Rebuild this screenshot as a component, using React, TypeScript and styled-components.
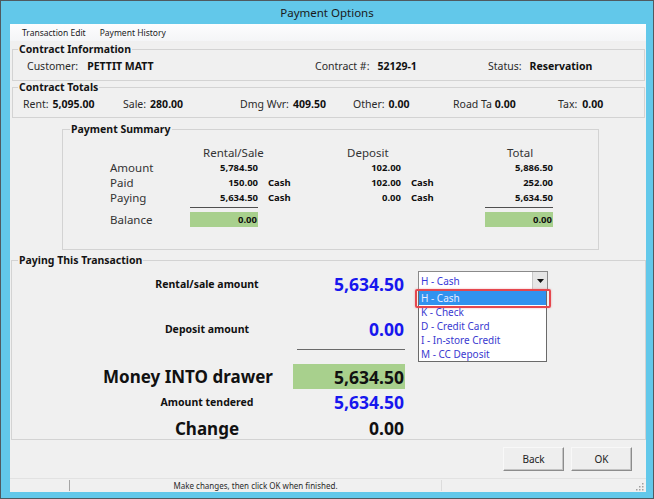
import styled, { createGlobalStyle } from 'styled-components';

const GlobalStyle = createGlobalStyle`
  html, body {
    margin: 0;
    padding: 0;
    background: #ffffff;
  }
  body {
    font-family: "Segoe UI", "Noto Sans", sans-serif;
  }
  * {
    box-sizing: border-box;
  }
`;

const Window = styled.div`
  width: 654px;
  height: 499px;
  background: #62c8ea;
  border: 1px solid #4f5a60;
  display: flex;
  flex-direction: column;
  color: #1b1b1b;
`;

const TitleBar = styled.div`
  height: 23px;
  display: flex;
  align-items: center;
  justify-content: center;
  font-size: 11.5px;
  color: #1a1a1a;
`;

const Client = styled.div`
  flex: 1;
  margin: 0 7px 6px 9px;
  background: #f0f0f0;
  display: flex;
  flex-direction: column;
`;

const MenuBar = styled.div`
  height: 17px;
  display: flex;
  align-items: center;
  gap: 14px;
  padding-left: 12px;
  font-size: 8.5px;
  background: linear-gradient(#fdfdfe, #f4f5f7);
`;

const GroupBox = styled.div<{ $mt: number; $ml: number; $mr: number; $pb: number }>`
  border: 1px solid #d3d3d3;
  margin: ${(p) => p.$mt}px ${(p) => p.$mr}px 0 ${(p) => p.$ml}px;
  padding-bottom: ${(p) => p.$pb}px;
`;

const Legend = styled.div<{ $ml: number }>`
  display: table;
  margin: -7px 0 0 ${(p) => p.$ml}px;
  padding: 0 1px;
  background: #f0f0f0;
  font-size: 10.5px;
  font-weight: 700;
  line-height: 13px;
  color: #141414;
`;

const InfoRow = styled.div<{ $mt: number; $pl: number }>`
  display: flex;
  height: 14px;
  align-items: center;
  margin-top: ${(p) => p.$mt}px;
  padding-left: ${(p) => p.$pl}px;
  font-size: 10.5px;
`;

const Field = styled.div<{ $w?: number; $gap: number }>`
  display: flex;
  align-items: center;
  gap: ${(p) => p.$gap}px;
  width: ${(p) => (p.$w ? `${p.$w}px` : 'auto')};
  white-space: nowrap;
`;

const FieldLabel = styled.span`
  color: #2a2a2a;
`;

const FieldValue = styled.span`
  font-weight: 700;
  color: #111;
`;

const SummaryGrid = styled.div`
  display: grid;
  grid-template-columns: 80px 68px 42px 101px 84px 68px;
  margin: 9px 0 0 47px;
`;

const Head = styled.div<{ $span: number; $pl: number }>`
  grid-column: span ${(p) => p.$span};
  padding-left: ${(p) => p.$pl}px;
  font-size: 11.5px;
  line-height: 15px;
  height: 15px;
  color: #333;
`;

const RowLabel = styled.div`
  font-size: 11.5px;
  line-height: 15px;
  height: 15px;
  color: #333;
`;

const Amount = styled.div`
  font-size: 9.5px;
  font-weight: 700;
  line-height: 15px;
  height: 15px;
  text-align: right;
  color: #111;
`;

const Method = styled.div`
  font-size: 9.5px;
  font-weight: 700;
  line-height: 15px;
  height: 15px;
  padding-left: 10px;
  color: #111;
`;

const Empty = styled.div``;

const Rule = styled.div`
  height: 5px;
  margin-top: 2px;
  border-top: 1px solid #505050;
`;

const BalanceBox = styled.div`
  height: 15px;
  background: #a8d08d;
  font-size: 9.5px;
  font-weight: 700;
  line-height: 15px;
  text-align: right;
  padding-right: 1px;
  color: #111;
`;

const PayRow = styled.div<{ $h: number; $mt: number }>`
  display: grid;
  grid-template-columns: 172px 112px 143px;
  align-items: center;
  height: ${(p) => p.$h}px;
  margin-top: ${(p) => p.$mt}px;
  padding-left: 109px;
`;

const PayLabel = styled.div<{ $big?: boolean; $shift?: number }>`
  text-align: center;
  white-space: nowrap;
  margin-left: ${(p) => -(p.$shift || 0)}px;
  margin-right: ${(p) => p.$shift || 0}px;
  font-size: ${(p) => (p.$big ? '17px' : '10.5px')};
  font-weight: 700;
  color: #111;
`;

const PayValue = styled.div<{ $blue?: boolean; $green?: boolean }>`
  height: 100%;
  display: flex;
  align-items: center;
  justify-content: flex-end;
  padding-right: 1px;
  font-size: 17.5px;
  font-weight: 700;
  color: ${(p) => (p.$blue ? '#1717ee' : '#111')};
  background: ${(p) => (p.$green ? '#a8d08d' : 'transparent')};
`;

const ValueRule = styled.div`
  grid-column: 2;
  margin-left: 4px;
  border-top: 1px solid #6a6a6a;
`;

const ComboWrap = styled.div`
  position: relative;
  align-self: start;
  margin: -1px 0 0 13px;
`;

const Combo = styled.div`
  height: 20px;
  width: 130px;
  background: #fff;
  border: 1px solid #8a8a8a;
  display: flex;
  align-items: center;
  font-size: 10px;
  color: #3737d8;
`;

const ComboText = styled.div`
  flex: 1;
  padding-left: 2px;
`;

const ComboButton = styled.div`
  width: 15px;
  height: 100%;
  background: #e6e6e6;
  border-left: 1px solid #c8c8c8;
  display: flex;
  align-items: center;
  justify-content: center;
`;

const DropList = styled.div`
  position: absolute;
  top: 19px;
  left: 0;
  width: 129px;
  background: #fff;
  border: 1px solid #6a6a6a;
  z-index: 2;
`;

const DropItem = styled.div<{ $selected?: boolean }>`
  position: relative;
  height: 14px;
  line-height: 14px;
  padding-left: 2px;
  font-size: 10px;
  color: ${(p) => (p.$selected ? '#e8ecff' : '#3a3ad0')};
  background: ${(p) => (p.$selected ? '#3192ef' : 'transparent')};
`;

const Highlight = styled.div`
  position: absolute;
  top: -2px;
  left: -4px;
  right: -5px;
  bottom: -3px;
  border: 2px solid #e5474e;
  border-radius: 2px;
  box-shadow: 0 0 2px rgba(229, 71, 78, 0.5);
`;

const ButtonBar = styled.div`
  flex: 1;
  display: flex;
  justify-content: flex-end;
  align-items: flex-start;
  gap: 7px;
  padding: 7px 14px 0 0;
`;

const DialogButton = styled.button`
  width: 61px;
  height: 24px;
  font-family: inherit;
  font-size: 10px;
  color: #222;
  background: #eeeeee;
  border: 1px solid;
  border-color: #f8f8f8 #8c8c8c #8c8c8c #f8f8f8;
  box-shadow: inset -1px -1px 0 #c4c4c4;
  padding: 0;
`;

const StatusBar = styled.div`
  height: 14px;
  display: flex;
  align-items: stretch;
  border-top: 1px solid #e2e2e2;
  font-size: 8px;
  color: #2a2a2a;
`;

const StatusPanel = styled.div<{ $w: number; $line: string }>`
  width: ${(p) => p.$w}px;
  border-right: 1px solid ${(p) => p.$line};
  display: flex;
  align-items: center;
  justify-content: center;
  margin: 1px 0;
`;

const Grip = styled.div`
  flex: 1;
  display: flex;
  justify-content: flex-end;
  align-items: flex-end;
  padding: 0 2px 1px 0;
`;

const summaryRows = [
  { label: 'Amount', rental: '5,784.50', rm: '', dep: '102.00', dm: '', total: '5,886.50' },
  { label: 'Paid', rental: '150.00', rm: 'Cash', dep: '102.00', dm: 'Cash', total: '252.00' },
  { label: 'Paying', rental: '5,634.50', rm: 'Cash', dep: '0.00', dm: 'Cash', total: '5,634.50' },
];

const tenders = ['H - Cash', 'K - Check', 'D - Credit Card', 'I - In-store Credit', 'M - CC Deposit'];

export default function App() {
  return (
    <>
      <GlobalStyle />
      <Window>
        <TitleBar>Payment Options</TitleBar>
        <Client>
          <MenuBar>
            <span>Transaction Edit</span>
            <span>Payment History</span>
          </MenuBar>

          <GroupBox $mt={8} $ml={2} $mr={1} $pb={7}>
            <Legend $ml={5}>Contract Information</Legend>
            <InfoRow $mt={3} $pl={14}>
              <Field $w={288} $gap={9}>
                <FieldLabel>Customer:</FieldLabel>
                <FieldValue>PETTIT MATT</FieldValue>
              </Field>
              <Field $w={173} $gap={8}>
                <FieldLabel>Contract #:</FieldLabel>
                <FieldValue>52129-1</FieldValue>
              </Field>
              <Field $gap={8}>
                <FieldLabel>Status:</FieldLabel>
                <FieldValue>Reservation</FieldValue>
              </Field>
            </InfoRow>
          </GroupBox>

          <GroupBox $mt={6} $ml={2} $mr={1} $pb={6}>
            <Legend $ml={5}>Contract Totals</Legend>
            <InfoRow $mt={3} $pl={10}>
              <Field $w={100} $gap={4}>
                <FieldLabel>Rent:</FieldLabel>
                <FieldValue>5,095.00</FieldValue>
              </Field>
              <Field $w={117} $gap={4}>
                <FieldLabel>Sale:</FieldLabel>
                <FieldValue>280.00</FieldValue>
              </Field>
              <Field $w={113} $gap={4}>
                <FieldLabel>Dmg Wvr:</FieldLabel>
                <FieldValue>409.50</FieldValue>
              </Field>
              <Field $w={100} $gap={4}>
                <FieldLabel>Other:</FieldLabel>
                <FieldValue>0.00</FieldValue>
              </Field>
              <Field $w={105} $gap={3}>
                <FieldLabel>Road Ta</FieldLabel>
                <FieldValue>0.00</FieldValue>
              </Field>
              <Field $gap={5}>
                <FieldLabel>Tax:</FieldLabel>
                <FieldValue>0.00</FieldValue>
              </Field>
            </InfoRow>
          </GroupBox>

          <GroupBox $mt={11} $ml={52} $mr={47} $pb={22}>
            <Legend $ml={7}>Payment Summary</Legend>
            <SummaryGrid>
              <Empty />
              <Head $span={2} $pl={13}>Rental/Sale</Head>
              <Head $span={2} $pl={47}>Deposit</Head>
              <Head $span={1} $pl={22}>Total</Head>
              {summaryRows.map((r) => (
                <>
                  <RowLabel key={r.label}>{r.label}</RowLabel>
                  <Amount>{r.rental}</Amount>
                  <Method>{r.rm}</Method>
                  <Amount>{r.dep}</Amount>
                  <Method>{r.dm}</Method>
                  <Amount>{r.total}</Amount>
                </>
              ))}
              <Empty />
              <Rule />
              <Empty />
              <Empty />
              <Empty />
              <Rule />
              <RowLabel>Balance</RowLabel>
              <BalanceBox>0.00</BalanceBox>
              <Empty />
              <Empty />
              <Empty />
              <BalanceBox>0.00</BalanceBox>
            </SummaryGrid>
          </GroupBox>

          <GroupBox $mt={10} $ml={1} $mr={0} $pb={3}>
            <Legend $ml={6}>Paying This Transaction</Legend>
            <PayRow $h={20} $mt={5}>
              <PayLabel>Rental/sale amount</PayLabel>
              <PayValue $blue>5,634.50</PayValue>
              <ComboWrap>
                <Combo>
                  <ComboText>H - Cash</ComboText>
                  <ComboButton>
                    <svg width="7" height="4" viewBox="0 0 7 4">
                      <path d="M0 0h7L3.5 4z" fill="#111" />
                    </svg>
                  </ComboButton>
                </Combo>
                <DropList>
                  {tenders.map((t, i) => (
                    <DropItem key={t} $selected={i === 0}>
                      {t}
                      {i === 0 && <Highlight />}
                    </DropItem>
                  ))}
                </DropList>
              </ComboWrap>
            </PayRow>
            <PayRow $h={20} $mt={25}>
              <PayLabel>Deposit amount</PayLabel>
              <PayValue $blue>0.00</PayValue>
            </PayRow>
            <PayRow $h={1} $mt={12}>
              <ValueRule />
            </PayRow>
            <PayRow $h={25} $mt={14}>
              <PayLabel $big $shift={19}>Money INTO drawer</PayLabel>
              <PayValue $green>5,634.50</PayValue>
            </PayRow>
            <PayRow $h={18} $mt={1}>
              <PayLabel>Amount tendered</PayLabel>
              <PayValue $blue>5,634.50</PayValue>
            </PayRow>
            <PayRow $h={20} $mt={8}>
              <PayLabel $big>Change</PayLabel>
              <PayValue>0.00</PayValue>
            </PayRow>
          </GroupBox>

          <ButtonBar>
            <DialogButton>Back</DialogButton>
            <DialogButton>OK</DialogButton>
          </ButtonBar>

          <StatusBar>
            <StatusPanel $w={60} $line="#a5a5a5" />
            <StatusPanel $w={372} $line="#dcdcdc">
              Make changes, then click OK when finished.
            </StatusPanel>
            <Grip>
              <svg width="8" height="8" viewBox="0 0 8 8">
                <g fill="#a0a0a0">
                  <rect x="6" y="0" width="1.5" height="1.5" />
                  <rect x="3" y="3" width="1.5" height="1.5" />
                  <rect x="6" y="3" width="1.5" height="1.5" />
                  <rect x="0" y="6" width="1.5" height="1.5" />
                  <rect x="3" y="6" width="1.5" height="1.5" />
                  <rect x="6" y="6" width="1.5" height="1.5" />
                </g>
              </svg>
            </Grip>
          </StatusBar>
        </Client>
      </Window>
    </>
  );
}
